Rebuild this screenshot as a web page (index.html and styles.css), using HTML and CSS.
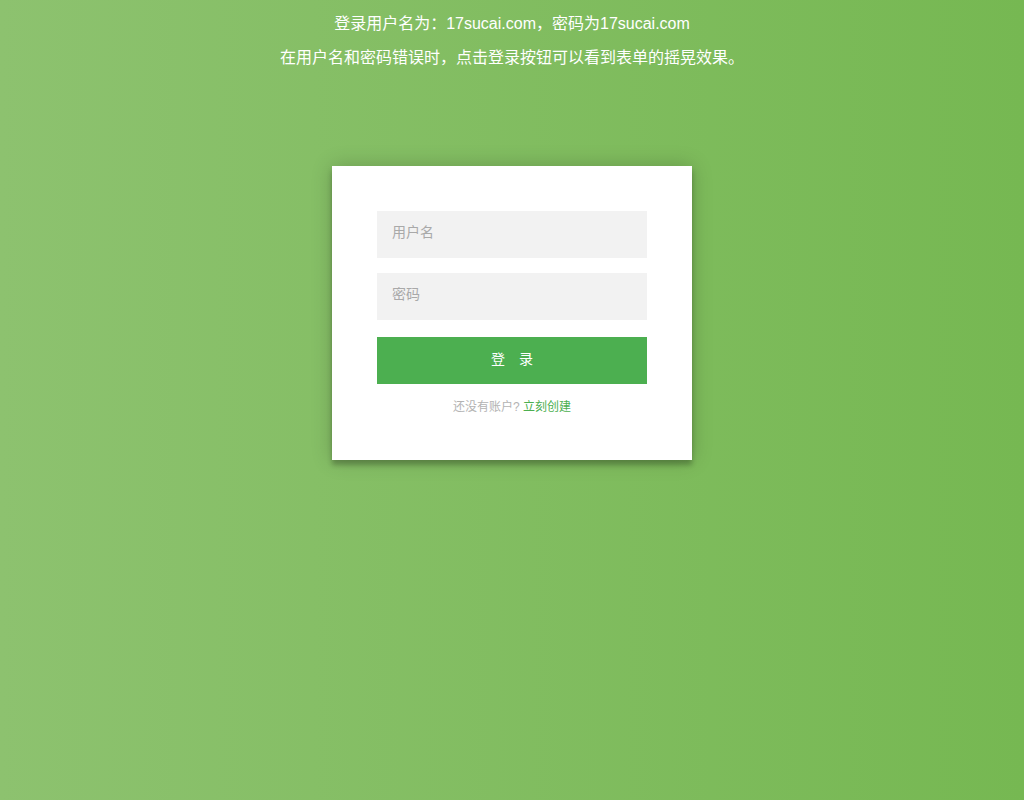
FILE: index.html
```html
<!DOCTYPE html>
<html lang="zh-CN">
<head>
<meta charset="UTF-8">
<meta name="viewport" content="width=device-width, initial-scale=1.0">
<title>登录</title>
<link rel="stylesheet" href="styles.css">
</head>
<body>

<!-- 提示文字 -->
<div class="tips">
    <p>登录用户名为：17sucai.com，密码为17sucai.com</p>
    <p>在用户名和密码错误时，点击登录按钮可以看到表单的摇晃效果。</p>
</div>

<!-- 登录表单 -->
<div class="login-page">
    <div class="form">
        <form class="login-form">
            <input type="text" placeholder="用户名">
            <input type="password" placeholder="密码">
            <button type="button">登　录</button>
            <p class="message">还没有账户? <a href="#">立刻创建</a></p>
        </form>
    </div>
</div>

</body>
</html>
```

FILE: styles.css
```css
/* 全局 */
body {
    margin: 0;
    padding: 0;
    min-height: 800px;
    background: #76b852;
    background: linear-gradient(to left, #76b852, #8dc26f);
    font-family: "Liberation Sans", "Noto Sans CJK SC", sans-serif;
}

.tips {
    text-align: center;
    color: #fff;
    font-size: 16px;
    padding-top: 15px;
}

.tips p {
    margin: 0 0 16px;
    line-height: 18px;
}

/* 登录框 */
.login-page {
    width: 360px;
    padding: 83px 0 0;
    margin: auto;
}

.form {
    position: relative;
    background: #fff;
    max-width: 360px;
    margin: 0 auto 100px;
    padding: 45px 45px 46px;
    text-align: center;
    box-sizing: border-box;
    box-shadow: 0 0 20px 0 rgba(0, 0, 0, 0.2), 0 5px 5px 0 rgba(0, 0, 0, 0.24);
}

.form input {
    display: block;
    font-family: "Liberation Sans", "Noto Sans CJK SC", sans-serif;
    outline: 0;
    background: #f2f2f2;
    width: 100%;
    height: 47px;
    border: 0;
    margin: 0 0 15px;
    padding: 0 15px 6px;
    box-sizing: border-box;
    font-size: 14px;
    color: #333;
}

.form input::placeholder {
    color: #a9a9a9;
}

.form button {
    display: block;
    font-family: "Liberation Sans", "Noto Sans CJK SC", sans-serif;
    outline: 0;
    background: #4caf50;
    width: 100%;
    height: 47px;
    border: 0;
    margin-top: 17px;
    padding: 0 0 6px;
    color: #fff;
    font-size: 14px;
    cursor: pointer;
}

.form .message {
    margin: 13px 0 0;
    color: #b3b3b3;
    font-size: 12px;
}

.form .message a {
    color: #4caf50;
    text-decoration: none;
}
```
